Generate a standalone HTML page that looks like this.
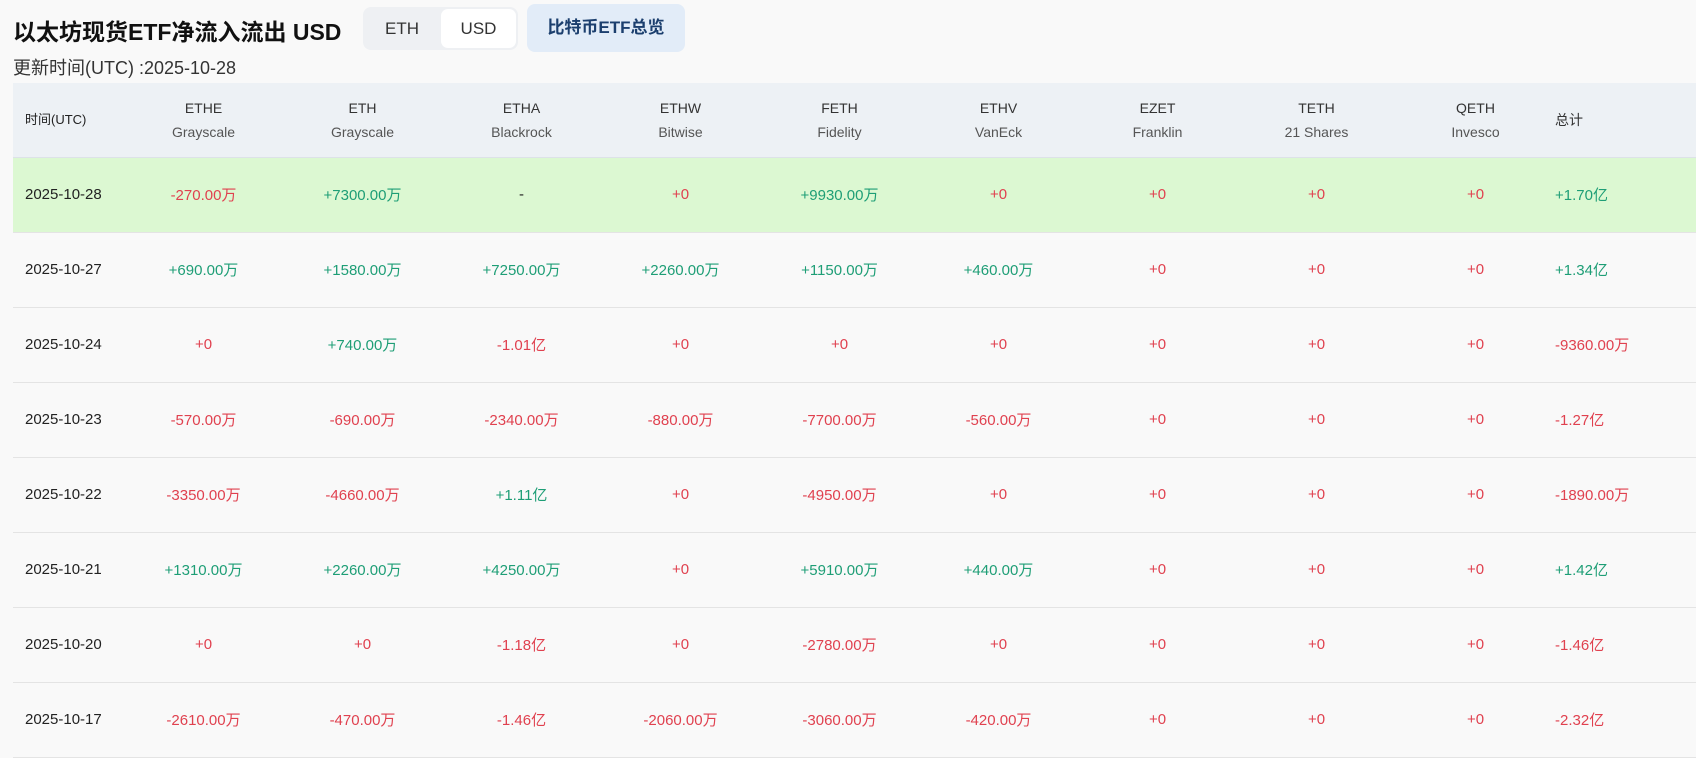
<!DOCTYPE html>
<html><head><meta charset="utf-8"><style>
*{margin:0;padding:0;box-sizing:border-box}
body{width:1696px;height:755px;background:#f9f9f9;font-family:"Liberation Sans","Noto Sans CJK SC",sans-serif;color:#222;overflow:hidden;position:relative}
.title{position:absolute;left:13px;top:16px;font-size:23px;font-weight:bold;color:#111;line-height:32px}
.sub{position:absolute;left:13px;top:56px;font-size:18px;color:#333;line-height:24px}
.tog{position:absolute;left:363px;top:7px;width:155px;height:43px;background:#eef0f3;border-radius:8px}
.tog span{position:absolute;top:2px;height:39px;line-height:39px;font-size:17px;color:#333;text-align:center}
.tog .a{left:0;width:78px}
.tog .b{left:78px;width:75px;background:#fff;border-radius:7px}
.btn{position:absolute;left:527px;top:4px;width:158px;height:48px;background:#e2ecf8;border-radius:8px;color:#1c3f6e;font-weight:bold;font-size:17px;line-height:48px;text-align:center}
table{position:absolute;left:13px;top:83px;width:1683px;border-collapse:collapse;table-layout:fixed}
th{background:#edf1f5;height:74px;font-weight:normal;font-size:14px;color:#333;line-height:24px;text-align:center;border-bottom:1px solid #dde2e8}
th small{display:block;font-size:14px;color:#555}
td{height:75px;text-align:center;font-size:15px;border-bottom:1px solid #e4e4e4}
td:first-child,th:first-child{text-align:left;padding-left:12px;color:#222}
td:last-child,th:last-child{text-align:left;padding-left:0}
tr.hl td{background:#dcf8d2}
.r{color:#e0414f}.g{color:#1e9e76}
</style></head><body>
<div class="title">以太坊现货ETF净流入流出 USD</div>
<div class="tog"><span class="a">ETH</span><span class="b">USD</span></div>
<div class="btn">比特币ETF总览</div>
<div class="sub">更新时间(UTC) :2025-10-28</div>
<table>
<colgroup><col style="width:111px"><col style="width:159px"><col style="width:159px"><col style="width:159px"><col style="width:159px"><col style="width:159px"><col style="width:159px"><col style="width:159px"><col style="width:159px"><col style="width:159px"><col></colgroup>
<tr><th style="font-size:13px">时间(UTC)</th><th>ETHE<small>Grayscale</small></th><th>ETH<small>Grayscale</small></th><th>ETHA<small>Blackrock</small></th><th>ETHW<small>Bitwise</small></th><th>FETH<small>Fidelity</small></th><th>ETHV<small>VanEck</small></th><th>EZET<small>Franklin</small></th><th>TETH<small>21 Shares</small></th><th>QETH<small>Invesco</small></th><th>总计</th></tr>
<tr class="hl"><td>2025-10-28</td><td class="r">-270.00万</td><td class="g">+7300.00万</td><td>-</td><td class="r">+0</td><td class="g">+9930.00万</td><td class="r">+0</td><td class="r">+0</td><td class="r">+0</td><td class="r">+0</td><td class="g">+1.70亿</td></tr>
<tr><td>2025-10-27</td><td class="g">+690.00万</td><td class="g">+1580.00万</td><td class="g">+7250.00万</td><td class="g">+2260.00万</td><td class="g">+1150.00万</td><td class="g">+460.00万</td><td class="r">+0</td><td class="r">+0</td><td class="r">+0</td><td class="g">+1.34亿</td></tr>
<tr><td>2025-10-24</td><td class="r">+0</td><td class="g">+740.00万</td><td class="r">-1.01亿</td><td class="r">+0</td><td class="r">+0</td><td class="r">+0</td><td class="r">+0</td><td class="r">+0</td><td class="r">+0</td><td class="r">-9360.00万</td></tr>
<tr><td>2025-10-23</td><td class="r">-570.00万</td><td class="r">-690.00万</td><td class="r">-2340.00万</td><td class="r">-880.00万</td><td class="r">-7700.00万</td><td class="r">-560.00万</td><td class="r">+0</td><td class="r">+0</td><td class="r">+0</td><td class="r">-1.27亿</td></tr>
<tr><td>2025-10-22</td><td class="r">-3350.00万</td><td class="r">-4660.00万</td><td class="g">+1.11亿</td><td class="r">+0</td><td class="r">-4950.00万</td><td class="r">+0</td><td class="r">+0</td><td class="r">+0</td><td class="r">+0</td><td class="r">-1890.00万</td></tr>
<tr><td>2025-10-21</td><td class="g">+1310.00万</td><td class="g">+2260.00万</td><td class="g">+4250.00万</td><td class="r">+0</td><td class="g">+5910.00万</td><td class="g">+440.00万</td><td class="r">+0</td><td class="r">+0</td><td class="r">+0</td><td class="g">+1.42亿</td></tr>
<tr><td>2025-10-20</td><td class="r">+0</td><td class="r">+0</td><td class="r">-1.18亿</td><td class="r">+0</td><td class="r">-2780.00万</td><td class="r">+0</td><td class="r">+0</td><td class="r">+0</td><td class="r">+0</td><td class="r">-1.46亿</td></tr>
<tr><td>2025-10-17</td><td class="r">-2610.00万</td><td class="r">-470.00万</td><td class="r">-1.46亿</td><td class="r">-2060.00万</td><td class="r">-3060.00万</td><td class="r">-420.00万</td><td class="r">+0</td><td class="r">+0</td><td class="r">+0</td><td class="r">-2.32亿</td></tr>
</table>
</body></html>
